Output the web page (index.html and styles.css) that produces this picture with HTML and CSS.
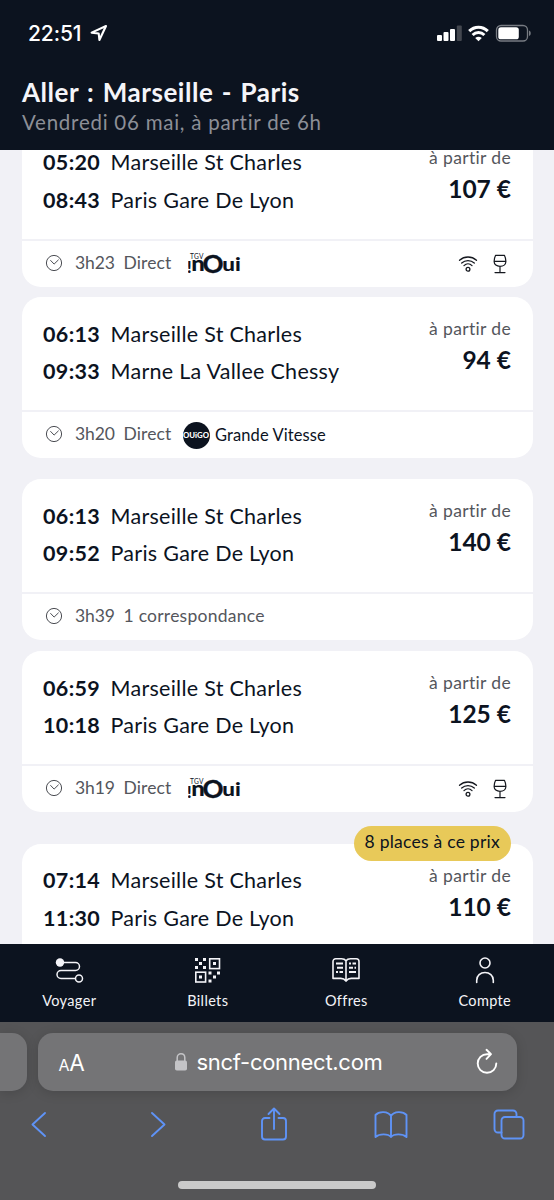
FILE: index.html
```html
<!DOCTYPE html>
<html lang="fr">
<head>
<meta charset="utf-8">
<title>Aller : Marseille - Paris</title>
<link rel="stylesheet" href="styles.css">
</head>
<body>
<svg width="0" height="0" class="defs">
  <symbol id="clock" viewBox="0 0 18 18"><g fill="none" stroke="#4b4d53" stroke-width="1"><circle cx="9" cy="9" r="7.6"/><path d="M5.400 6.200l3.700 3.900 4.500-4.400"/></g></symbol>
  <symbol id="wifi" viewBox="0 0 20 20"><g fill="none" stroke="#15181f" stroke-width="1.300" stroke-linecap="round"><path d="M1.500 6.300C6.500 1.900 13.500 1.900 18.500 6.300M3.700 9.100c3.600-3.300 9-3.300 12.600 0M6 11.600c2.300-2.200 5.700-2.200 8 0"/><circle cx="10" cy="15.200" r="1.900"/></g></symbol>
  <symbol id="glass" viewBox="0 0 16 20"><g fill="none" stroke="#15181f" stroke-width="1.200" stroke-linecap="round" stroke-linejoin="round"><path d="M3.600 1.300h8.800c1 2 1.500 4.200 1.500 6.200 0 3-2.600 4.800-5.900 4.800S2.100 10.500 2.100 7.500c0-2 .5-4.200 1.500-6.200zM2.100 7.300h11.800M8 12.300V18.600M3 18.600h10"/></g></symbol>
  <symbol id="inoui" viewBox="0 0 54 24">
    <g fill="#0c131f" font-family="Lato, sans-serif">
      <text x="2" y="6.500" font-size="6.600" textLength="13.500">TGV</text>
      <text x="-1" y="20.600" font-size="16" font-weight="900">!</text>
      <text x="3.300" y="19" font-size="21.500" font-weight="900" textLength="13.500" lengthAdjust="spacingAndGlyphs">n</text>
      <text x="14.600" y="20.800" font-size="24.500" font-weight="700" textLength="21" lengthAdjust="spacingAndGlyphs" stroke="#0c131f" stroke-width=".4">O</text>
      <text x="34.300" y="19" font-size="18" font-weight="900" textLength="18.500" lengthAdjust="spacingAndGlyphs">ui</text>
    </g>
  </symbol>
</svg>

<header class="header">
  <div class="status">
    <span class="status-time">22:51</span>
    <svg class="locate" width="18" height="18" viewBox="0 0 18 18"><path d="M1.600 8.600L16 2 9.400 16 8.700 9.500z" fill="none" stroke="#fff" stroke-width="2.100" stroke-linejoin="round"/></svg>
    <svg class="status-icons" width="96" height="20" viewBox="0 0 96 20">
      <g fill="#fff"><rect x="1" y="11" width="5" height="6" rx="1"/><rect x="7.500" y="8" width="5" height="9" rx="1"/><rect x="14" y="5" width="5" height="12" rx="1"/></g>
      <rect x="20.800" y="1.500" width="5" height="15.500" rx="1" fill="#43474f"/>
      <g fill="none" stroke="#fff" stroke-width="3"><path d="M33.200 7.100c5.300-5.300 13.300-5.300 18.600 0M36.600 11c3.400-3.300 8.400-3.300 11.800 0"/></g>
      <path d="M39.200 13.900c2-1.700 4.600-1.700 6.600 0L42.500 17.300z" fill="#fff"/>
      <rect x="60.500" y="1.500" width="31" height="15.500" rx="4.500" fill="none" stroke="#777b82" stroke-width="1.300"/>
      <rect x="62.300" y="3.300" width="20.500" height="12" rx="2.600" fill="#fff"/>
      <path d="M93 6.500c2.300.6 2.300 4.900 0 5.500z" fill="#777b82"/>
    </svg>
  </div>
  <h1 class="title">Aller : Marseille - Paris</h1>
  <p class="date">Vendredi 06 mai, à partir de 6h</p>
</header>

<main class="results">
  <article class="card first">
    <div class="trip">
      <div class="stops"><b>05:20</b><span>Marseille St Charles</span><b>08:43</b><span>Paris Gare De Lyon</span></div>
      <div class="fare"><span class="from">à partir de</span><strong class="price">107 €</strong></div>
    </div>
    <div class="info"><svg class="clock"><use href="#clock"/></svg><span class="duration">3h23</span><span class="kind direct">Direct</span><svg class="inoui"><use href="#inoui"/></svg><svg class="wifi"><use href="#wifi"/></svg><svg class="glass"><use href="#glass"/></svg></div>
  </article>
  <article class="card">
    <div class="trip">
      <div class="stops"><b>06:13</b><span>Marseille St Charles</span><b>09:33</b><span>Marne La Vallee Chessy</span></div>
      <div class="fare"><span class="from">à partir de</span><strong class="price">94 €</strong></div>
    </div>
    <div class="info"><svg class="clock"><use href="#clock"/></svg><span class="duration">3h20</span><span class="kind direct">Direct</span><span class="ouigo">OUiGO</span><span class="brand">Grande Vitesse</span></div>
  </article>
  <article class="card spaced">
    <div class="trip">
      <div class="stops"><b>06:13</b><span>Marseille St Charles</span><b>09:52</b><span>Paris Gare De Lyon</span></div>
      <div class="fare"><span class="from">à partir de</span><strong class="price">140 €</strong></div>
    </div>
    <div class="info"><svg class="clock"><use href="#clock"/></svg><span class="duration">3h39</span><span class="kind">1 correspondance</span></div>
  </article>
  <article class="card">
    <div class="trip">
      <div class="stops"><b>06:59</b><span>Marseille St Charles</span><b>10:18</b><span>Paris Gare De Lyon</span></div>
      <div class="fare"><span class="from">à partir de</span><strong class="price">125 €</strong></div>
    </div>
    <div class="info"><svg class="clock"><use href="#clock"/></svg><span class="duration">3h19</span><span class="kind direct">Direct</span><svg class="inoui"><use href="#inoui"/></svg><svg class="wifi"><use href="#wifi"/></svg><svg class="glass"><use href="#glass"/></svg></div>
  </article>
  <article class="card badged">
    <span class="badge">8 places à ce prix</span>
    <div class="trip">
      <div class="stops"><b>07:14</b><span>Marseille St Charles</span><b>11:30</b><span>Paris Gare De Lyon</span></div>
      <div class="fare"><span class="from">à partir de</span><strong class="price">110 €</strong></div>
    </div>
  </article>
</main>

<nav class="tabs">
  <a class="tab"><svg width="30" height="28" viewBox="0 0 30 28"><g fill="none" stroke="#f4f4f8" stroke-width="1.500"><path d="M6 5.500h15.500a4 4 0 0 1 0 8H7a4 4 0 0 0 0 8h14"/><circle cx="25" cy="21.500" r="3.500"/></g><circle cx="6" cy="5.500" r="4.200" fill="#f4f4f8"/></svg><span>Voyager</span></a>
  <a class="tab"><svg width="30" height="28" viewBox="0 0 30 28"><g fill="none" stroke="#f4f4f8" stroke-width="1.600"><rect x="16.700" y="1.800" width="9.800" height="9.800"/><rect x="2.800" y="15.200" width="9.800" height="9.800"/></g><path fill="#f4f4f8" d="M2 1h3v3H2zM10 1h3v3h-3zM6 5h3v3H6zM2 9h3v3H2zM10 9h3v3h-3zM20 5h3v3h-3zM6 18.500h3v3H6zM15.500 14.500h3v3h-3zM24 14.500h3v3h-3zM20 18.500h3v3h-3zM15.500 22.500h3v3h-3z"/></svg><span>Billets</span></a>
  <a class="tab"><svg width="30" height="28" viewBox="0 0 30 28"><path d="M15 3.800C13.600 1.800 12.500 1.700 10.500 1.700H4.700a2.700 2.700 0 0 0-2.700 2.700v17h7.800c2.200 0 3.700.7 5.200 2.700 1.500-2 3-2.700 5.200-2.700H28v-17a2.700 2.700 0 0 0-2.700-2.700h-5.800c-2 0-3.100.1-4.500 2.100zM15 3.800v20" fill="none" stroke="#f4f4f8" stroke-width="1.600" stroke-linejoin="round"/><path d="M5 6.500h7M6 10.700h6M5 15h2m1.500 0h3.500M18 6.500h2m1.500 0h3.500M18 10.700h4m1.500 0h1.500M18 15h7" stroke="#f4f4f8" stroke-width="2"/></svg><span>Offres</span></a>
  <a class="tab"><svg width="30" height="28" viewBox="0 0 30 28"><g fill="none" stroke="#f4f4f8" stroke-width="1.600" stroke-linecap="round"><circle cx="15" cy="6" r="5"/><path d="M6.700 25.500v-2.300c0-4.600 3.700-7.700 8.300-7.700s8.300 3.100 8.300 7.700v2.300"/></g></svg><span>Compte</span></a>
</nav>

<footer class="browser">
  <div class="address-row">
    <div class="prev-tab"></div>
    <div class="address">
      <span class="text-size"><small>A</small>A</span>
      <svg class="lock" width="14" height="20" viewBox="0 0 14 20"><rect x="1" y="8.500" width="12" height="10" rx="1.800" fill="#c4c4c7"/><path d="M3.200 9V5.800C3.200.5 10.800.5 10.800 5.800V9" fill="none" stroke="#c4c4c7" stroke-width="1.500"/></svg>
      <span class="url">sncf-connect.com</span>
      <svg class="reload" width="22" height="28" viewBox="0 0 22 28"><g fill="none" stroke="#fff" stroke-width="1.900" stroke-linecap="round" stroke-linejoin="round"><path d="M14.500 6.200H11A9.300 9.300 0 1 0 20.300 15.500M10.500 1.800l4.500 4.400-4.500 4.700"/></g></svg>
    </div>
  </div>
  <div class="toolbar">
    <svg width="30" height="36" viewBox="0 0 30 36"><path d="M21 7L8.500 18.500 21 30"/></svg>
    <svg width="30" height="36" viewBox="0 0 30 36"><path d="M9 7l12.500 11.500L9 30"/></svg>
    <svg width="30" height="36" viewBox="0 0 30 36"><path d="M10.500 12H6a3 3 0 0 0-3 3v15.500a3 3 0 0 0 3 3h18a3 3 0 0 0 3-3V15a3 3 0 0 0-3-3h-4.500M15 23V3M9.500 8L15 2.500 20.500 8"/></svg>
    <svg width="34" height="36" viewBox="0 0 34 36"><path d="M17 10C14 5 5 5 1.500 9v22c4-3.500 12.500-3.500 15.500 0 3-3.500 11.500-3.500 15.500 0V9C29 5 20 5 17 10zM17 10v21"/></svg>
    <svg width="32" height="36" viewBox="0 0 32 36"><path d="M8.500 26.500H5a3.500 3.500 0 0 1-3.500-3.500V8A3.500 3.500 0 0 1 5 4.500h15A3.500 3.500 0 0 1 23.500 8v3"/><rect x="8.500" y="11" width="22" height="21.500" rx="3.500"/></svg>
  </div>
  <div class="home-bar"></div>
</footer>
</body>
</html>
```
FILE: styles.css
```css
* { box-sizing: border-box; }
body {
  margin: 0;
  width: 554px;
  height: 1200px;
  overflow: hidden;
  display: flex;
  flex-direction: column;
  background: #f1f1f6;
  color: #0c131f;
  font-family: Lato, "Open Sans", sans-serif;
  white-space: nowrap;
}
.defs { display: none; }

.header {
  height: 150px;
  flex: none;
  padding-left: 22px;
  background: #0c131f;
  color: #fff;
  position: relative;
  z-index: 1;
}
.status { display: flex; height: 77px; padding: 24px 22px 0 6px; }
.status-time {
  font: 500 21px/20px Inter, sans-serif;
  width: 56px;
  letter-spacing: -.1px;
}
.locate { margin-left: 5.500px; }
.status-icons { margin-left: auto; }
.title { margin: 0; font-size: 26px; line-height: 30px; font-weight: 700; color: #f5f5f9; letter-spacing: .55px; word-spacing: 1.500px; }
.date { margin: 0; font-size: 20.500px; line-height: 31px; color: #8c8f97; letter-spacing: .75px; }

.results { height: 794px; flex: none; overflow: hidden; padding: 0 21.500px; }
.card { position: relative; height: 161px; margin-top: 10.500px; background: #fff; border-radius: 19px; }
.card.first { margin-top: -24.500px; }
.card.spaced { margin-top: 21px; }
.card.spaced + .card { margin-top: 11px; }
.card.badged { margin-top: 31.500px; }
.trip { display: flex; justify-content: space-between; height: 115px; padding: 18px 21.500px 0; border-bottom: 2.500px solid #f1f1f6; }
.stops { display: grid; grid-template-columns: 67.500px auto; grid-auto-rows: 37.500px; margin-top: .6px; font-size: 21.500px; line-height: 37.500px; letter-spacing: .28px; }
.stops b { font-weight: 700; letter-spacing: .35px; }
.fare { display: flex; flex-direction: column; align-items: flex-end; }
.from { font-size: 17.500px; line-height: 28px; color: #54565c; letter-spacing: .35px; }
.price { font-size: 24.500px; line-height: 34px; font-weight: 700; }
.info { display: flex; align-items: center; height: 46px; padding: 0 21.500px 0 23.500px; font-size: 17.500px; color: #54565c; }
.clock { width: 18px; height: 18px; margin-bottom: 2px; }
.duration { width: 48.500px; margin: 0 0 3px 12px; letter-spacing: -.1px; }
.kind { margin-bottom: 3px; letter-spacing: .25px; }
.direct { width: 50px; letter-spacing: .1px; }
.inoui { width: 54px; height: 24px; margin-left: 14px; }
.wifi { width: 20px; height: 20px; margin-left: auto; }
.glass { width: 16px; height: 20px; margin: 0 3px 0 14px; }
.ouigo { width: 27px; height: 27px; margin: 1px 5px 0 9px; border-radius: 50%; background: #0c131f; color: #fff; font-size: 7.800px; font-weight: 900; line-height: 27px; text-align: center; }
.brand { font-size: 16.500px; color: #0c131f; margin-left: .5px; letter-spacing: .1px; }
.badge { position: absolute; top: -17.500px; right: 21.500px; width: 157.500px; height: 35px; border-radius: 18px; background: #e8c959; font-size: 17.500px; line-height: 32px; text-align: center; letter-spacing: .25px; }

.tabs { display: grid; grid-template-columns: repeat(4, 1fr); height: 78px; flex: none; background: #0c131f; color: #f4f4f8; }
.tab { display: flex; flex-direction: column; align-items: center; padding-top: 13px; font-size: 14.500px; line-height: 31px; letter-spacing: .35px; }

.browser { height: 178px; flex: none; background: #555557; padding-top: 11px; }
.address-row { display: flex; gap: 11px; height: 58px; }
.prev-tab { width: 26.500px; border-radius: 0 15px 15px 0; background: #747476; box-shadow: 0 2px 12px rgba(0, 0, 0, .15); }
.address { display: flex; align-items: center; width: 479px; border-radius: 15px; background: #747476; box-shadow: 0 2px 12px rgba(0, 0, 0, .15); color: #fff; font-family: Inter, sans-serif; padding: 0 18.500px 0 21px; }
.text-size { width: 115px; font-size: 22.500px; letter-spacing: -.2px; }
.text-size small { font-size: 16px; }
.url { margin-left: 9px; font-size: 22px; letter-spacing: -.28px; }
.reload { margin-left: auto; }
.toolbar { display: grid; grid-template-columns: 120px 115.500px 119px 116.500px auto; justify-items: center; margin-left: -21.500px; padding-top: 15px; }
.toolbar svg { fill: none; stroke: #5f93f6; stroke-width: 1.900; stroke-linecap: round; stroke-linejoin: round; }
.toolbar svg:nth-child(2) { margin-left: 4px; }
.toolbar svg:last-child { justify-self: start; margin-left: 43px; }
.home-bar { width: 198px; height: 7.500px; margin: 39px auto 0; border-radius: 4px; background: #cacaca; }
```
